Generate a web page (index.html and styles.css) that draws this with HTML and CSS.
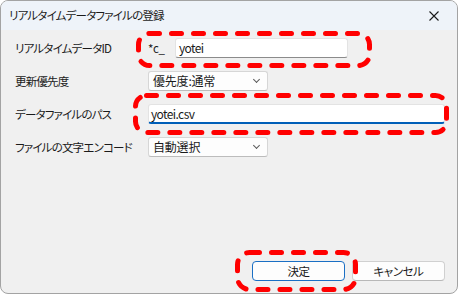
FILE: index.html
```html
<!DOCTYPE html>
<html lang="ja">
<head>
    <meta charset="UTF-8">
    <meta name="viewport" content="width=device-width, initial-scale=1.0">
    <title>リアルタイムデータファイルの登録</title>
    <link rel="stylesheet" href="styles.css">
</head>
<body>
    <div class="dialog">
        <div class="titlebar">
            <span class="title">リアルタイムデータファイルの登録</span>
            <svg class="close" width="10" height="10" viewBox="0 0 10 10">
                <path d="M0.5 0.5 L9.5 9.5 M9.5 0.5 L0.5 9.5" stroke="#1a1a1a" stroke-width="1.1" fill="none"/>
            </svg>
        </div>

        <div class="content">
            <div class="rows">
                <label class="label">リアルタイムデータID</label>
                <div class="ctrl">
                    <span class="prefix">*c_</span>
                    <div class="input short">yotei</div>
                </div>

                <label class="label">更新優先度</label>
                <div class="ctrl">
                    <div class="select">優先度:通常<span class="chev"></span></div>
                </div>

                <label class="label">データファイルのパス</label>
                <div class="ctrl">
                    <div class="input wide focus">yotei.csv</div>
                </div>

                <label class="label">ファイルの文字エンコード</label>
                <div class="ctrl">
                    <div class="select">自動選択<span class="chev"></span></div>
                </div>
            </div>

            <div class="buttons">
                <button class="btn default">決定</button>
                <button class="btn">キャンセル</button>
            </div>
        </div>

        <!-- red dashed marks drawn over the dialog -->
        <svg class="marks" width="458" height="295" viewBox="0 0 458 295">
            <g fill="none" stroke="#ff0000" stroke-width="5" stroke-linecap="round" stroke-dasharray="10 12">
                <rect x="138.5" y="33.5" width="231" height="32" rx="11"/>
                <rect x="135.5" y="95.5" width="311" height="37" rx="11"/>
                <rect x="237.5" y="252.5" width="118" height="37" rx="12"/>
            </g>
        </svg>
    </div>
</body>
</html>
```

FILE: styles.css
```css
:root {
    --body: #f0f0f0;
    --title: #eef3f9;
    --edge: #a3a3a3;
    --field-line: #e3e3e3;
    --accent: #005fb8;
}

body {
    margin: 0;
    padding: 0;
    background: #ffffff;
    font-family: 'Noto Sans CJK JP', 'Noto Sans', sans-serif;
    font-feature-settings: "palt";
    font-size: 11.5px;
    letter-spacing: -0.8px;
    color: #1a1a1a;
}

.dialog {
    position: relative;
    width: 456px;
    height: 292px;
    border: 1px solid var(--edge);
    border-radius: 8px;
    background: var(--body);
    overflow: hidden;
    display: flex;
    flex-direction: column;
}

.titlebar {
    height: 29px;
    background: var(--title);
    display: flex;
    align-items: center;
    justify-content: space-between;
    padding: 0 18px 0 8px;
}

.title {
    margin-top: -1px;
}

.close {
    display: block;
}

.content {
    flex: 1;
    display: flex;
    flex-direction: column;
    padding: 8px 12px 12px 14px;
}

.rows {
    display: grid;
    grid-template-columns: 133px 1fr;
    grid-auto-rows: 20px;
    row-gap: 13px;
    align-items: center;
}

.label {
    line-height: 20px;
}

.ctrl {
    display: flex;
    align-items: center;
    height: 20px;
}

.prefix {
    width: 27px;
    letter-spacing: -0.4px;
}

.input {
    box-sizing: border-box;
    height: 20px;
    background: #ffffff;
    border: 1px solid var(--field-line);
    border-bottom-color: #8b8b8b;
    border-radius: 3px;
    padding: 0 3px;
    line-height: 18px;
    font-size: 12px;
    letter-spacing: -0.6px;
}

.input.short {
    width: 173px;
}

.input.wide {
    width: 297px;
    padding-left: 2px;
}

.input.focus {
    border-bottom: 2px solid var(--accent);
    line-height: 17px;
}

.select {
    position: relative;
    box-sizing: border-box;
    width: 120px;
    height: 20px;
    background: #fdfdfd;
    border: 1px solid #d6d6d6;
    border-bottom-color: #bcbcbc;
    border-radius: 3px;
    padding: 0 4px;
    line-height: 18px;
    font-size: 12px;
    letter-spacing: -0.2px;
}

.chev {
    position: absolute;
    right: 8px;
    top: 5px;
    width: 4px;
    height: 4px;
    border-right: 1px solid #5a5a5a;
    border-bottom: 1px solid #5a5a5a;
    transform: rotate(45deg);
}

.buttons {
    margin-top: auto;
    display: flex;
    justify-content: flex-end;
    gap: 7px;
}

.btn {
    box-sizing: border-box;
    width: 93px;
    height: 20px;
    padding: 0;
    font-family: inherit;
    font-feature-settings: "palt";
    font-size: 11.5px;
    letter-spacing: -0.4px;
    color: #1a1a1a;
    background: #fdfdfd;
    border: 1px solid #d0d0d0;
    border-bottom-color: #b8b8b8;
    border-radius: 4px;
}

.btn.default {
    border: 1px solid #1a6fc4;
}

.marks {
    position: absolute;
    left: -1px;
    top: -1px;
    pointer-events: none;
}
```
